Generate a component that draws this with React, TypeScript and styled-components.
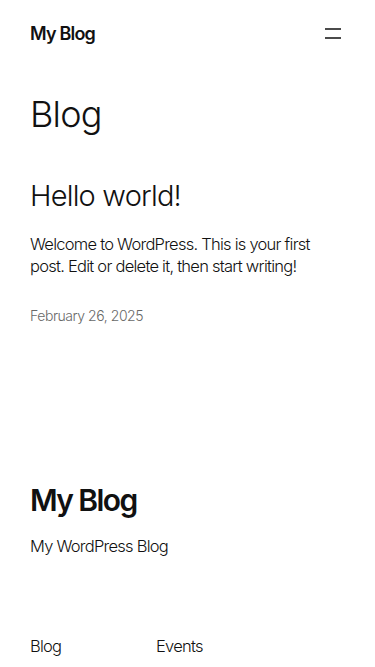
import React from "react";
import styled, { createGlobalStyle } from "styled-components";

const Global = createGlobalStyle`
  html, body { margin: 0; padding: 0; background: #fff; }
  body { font-family: Inter, "Noto Sans", sans-serif; color: #111; -webkit-font-smoothing: antialiased; }
  * { box-sizing: border-box; }
`;

const Page = styled.div`
  width: 375px;
  padding: 0 30px;
`;

const Header = styled.header`
  height: 66px;
  display: flex;
  align-items: center;
  justify-content: space-between;
`;

const SiteTitle = styled.a`
  font-size: 18px;
  font-weight: 600;
  letter-spacing: -0.8px;
  color: #111;
  text-decoration: none;
`;

const MenuButton = styled.button`
  width: 24px;
  height: 24px;
  border: 0;
  background: none;
  padding: 0;
  margin-right: 0;
  display: flex;
  align-items: center;
  justify-content: center;
  color: #111;
`;

const Main = styled.main`
  padding-top: 26px;
`;

const PageTitle = styled.h1`
  margin: 0;
  font-size: 36px;
  font-weight: 300;
  letter-spacing: -0.8px;
  line-height: 44px;
`;

const Post = styled.article`
  margin-top: 42px;
`;

const PostTitle = styled.h2`
  margin: 0;
  font-size: 29px;
  font-weight: 300;
  letter-spacing: -0.8px;
  line-height: 36px;
`;

const Text = `
  font-size: 16.5px;
  font-weight: 300;
  letter-spacing: -0.75px;
  line-height: 22px;
`;

const Excerpt = styled.p`
  margin: 19px 0 0;
  ${Text}
`;

const PostDate = styled.time`
  display: block;
  margin-top: 29px;
  font-size: 14px;
  font-weight: 300;
  letter-spacing: -0.45px;
  color: #686868;
  line-height: 20px;
`;

const Footer = styled.footer`
  margin-top: 155px;
`;

const FooterTitle = styled.div`
  font-size: 30px;
  font-weight: 600;
  letter-spacing: -1.6px;
  line-height: 38px;
`;

const Tagline = styled.p`
  margin: 16px 0 0;
  ${Text}
`;

const FooterNav = styled.nav`
  margin-top: 78px;
  display: grid;
  grid-template-columns: 126px 1fr;
`;

const NavLink = styled.a`
  ${Text}
  color: #111;
  text-decoration: none;
`;

export default function App() {
  return (
    <>
      <Global />
      <Page>
        <Header>
          <SiteTitle href="#">My Blog</SiteTitle>
          <MenuButton aria-label="Open menu">
            <svg width="24" height="24" viewBox="0 0 24 24">
              <rect x="4" y="7.25" width="16" height="1.5" fill="currentColor" />
              <rect x="4" y="16.25" width="16" height="1.5" fill="currentColor" />
            </svg>
          </MenuButton>
        </Header>
        <Main>
          <PageTitle>Blog</PageTitle>
          <Post>
            <PostTitle>Hello world!</PostTitle>
            <Excerpt>
              Welcome to WordPress. This is your first post. Edit or delete it, then start writing!
            </Excerpt>
            <PostDate>February 26, 2025</PostDate>
          </Post>
        </Main>
        <Footer>
          <FooterTitle>My Blog</FooterTitle>
          <Tagline>My WordPress Blog</Tagline>
          <FooterNav>
            <NavLink href="#">Blog</NavLink>
            <NavLink href="#">Events</NavLink>
          </FooterNav>
        </Footer>
      </Page>
    </>
  );
}
